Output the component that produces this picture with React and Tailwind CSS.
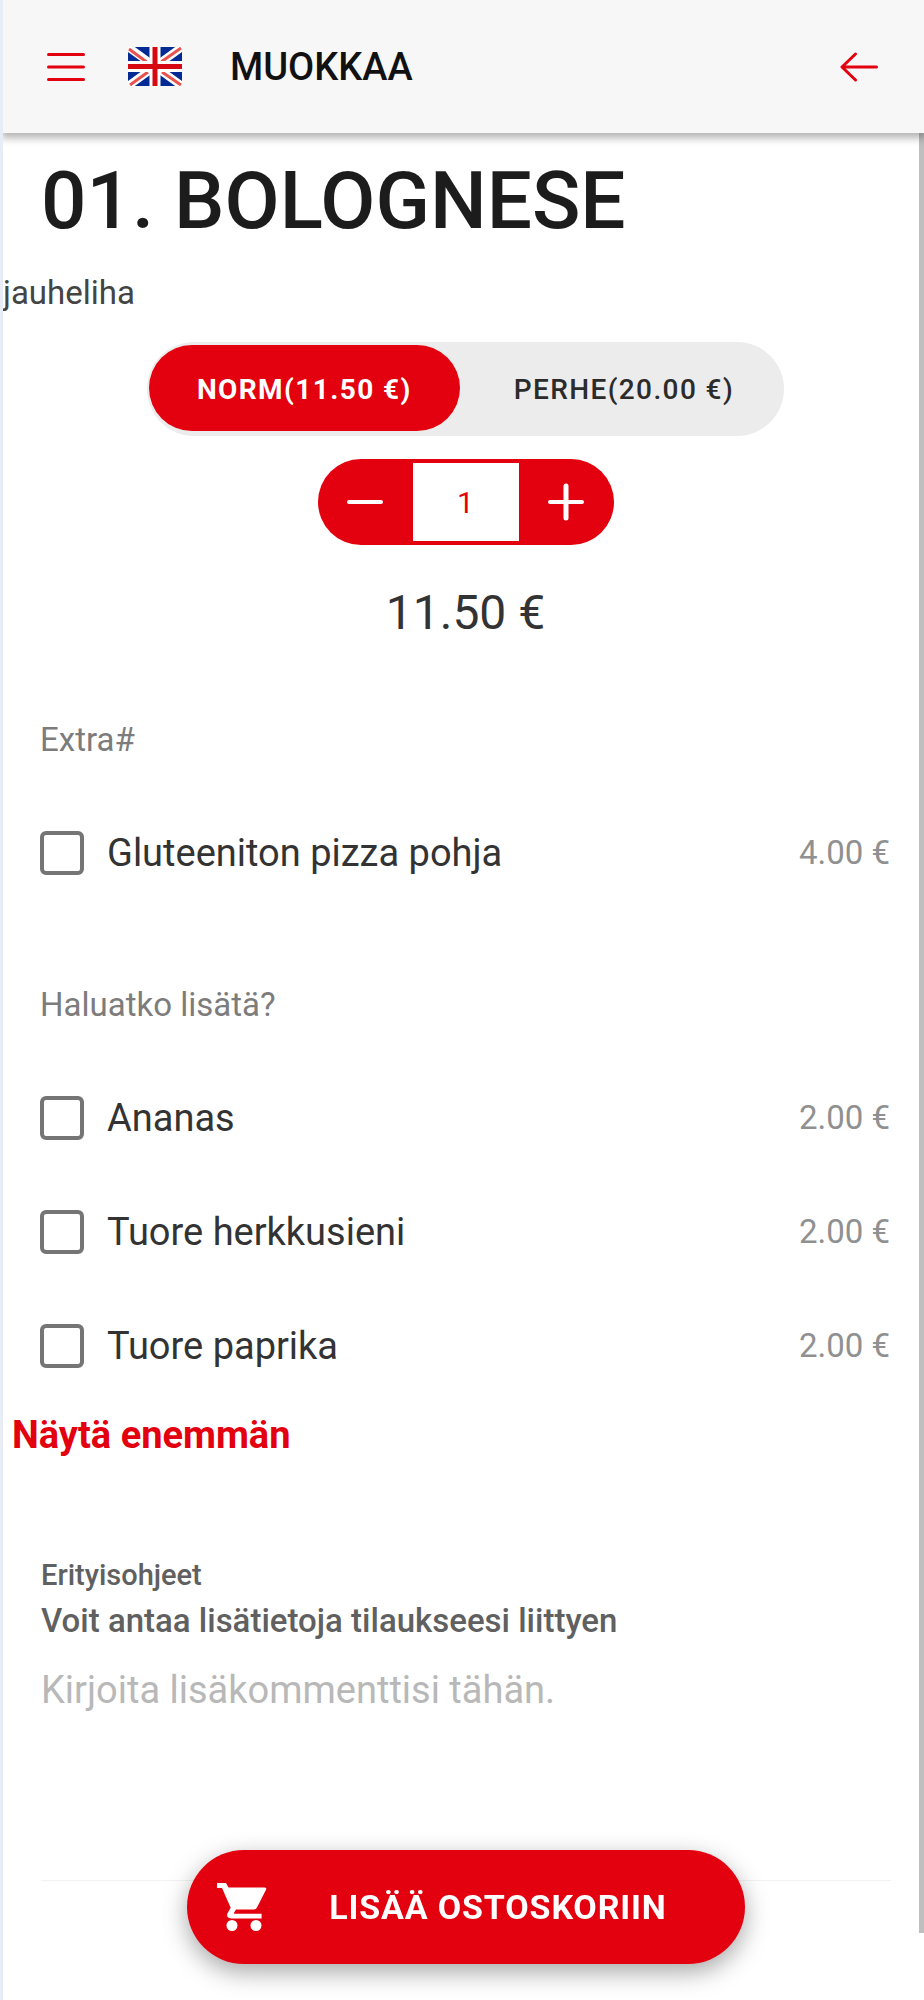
import { useState } from 'react';
import clsx from 'clsx';

const SIZES = [
  { id: 'norm', label: 'NORM', price: 11.5 },
  { id: 'perhe', label: 'PERHE', price: 20 },
];

const GROUPS = [
  { title: 'Extra#', options: [{ name: 'Gluteeniton pizza pohja', price: 4 }] },
  {
    title: 'Haluatko lisätä?',
    options: [
      { name: 'Ananas', price: 2 },
      { name: 'Tuore herkkusieni', price: 2 },
      { name: 'Tuore paprika', price: 2 },
    ],
  },
];

const formatPrice = (value) => `${value.toFixed(2)} €`;

function MenuIcon() {
  return (
    <svg width="38" height="30" viewBox="0 0 38 30" stroke="#e3000f" strokeWidth="3" strokeLinecap="round">
      <path d="M1.5 2.5h35M1.5 15h35M1.5 27.5h35" />
    </svg>
  );
}

function BackIcon() {
  return (
    <svg
      width="38"
      height="30"
      viewBox="0 0 38 30"
      fill="none"
      stroke="#e3000f"
      strokeWidth="3"
      strokeLinecap="round"
      strokeLinejoin="round"
    >
      <path d="M15.5 2 2 15l13.5 13M2 15h34.5" />
    </svg>
  );
}

function CartIcon() {
  return (
    <svg width="50" height="48" viewBox="0 0 50 48" fill="#fff">
      <path d="M0 0h9l2.500 4.500H47.500q2.500 0 1.500 2.300L40 24.500q-1 2-3.200 2H19l-2 3.200q-.4 1 .6 1h27v4.800H14q-5.500-.7-3.500-5.200l3.200-5.600L5 5H0z" />
      <circle cx="15" cy="42.500" r="5.500" />
      <circle cx="39" cy="42.500" r="5.500" />
    </svg>
  );
}

function UkFlag() {
  return (
    <svg width="54" height="39" viewBox="0 0 54 39">
      <path fill="#012a94" d="M0 0h54v39H0z" />
      <path stroke="#fff" strokeWidth="8" d="m0 0 54 39M54 0 0 39" />
      <path stroke="#e8534f" strokeWidth="3" d="M1 2 20 16M53 1 33 15M2 38l18-13M53 38 34 25" />
      <path stroke="#fff" strokeWidth="11" d="M27 0v39M0 19.5h54" />
      <path stroke="#d60812" strokeWidth="5" d="M27 0v39M0 19.5h54" />
    </svg>
  );
}

function Header() {
  return (
    <header className="relative z-10 flex h-[133px] items-center bg-[#f7f7f7] pr-[46px] pl-11 shadow-[0_3px_8px_2px_rgba(0,0,0,0.3)]">
      <button aria-label="Valikko">
        <MenuIcon />
      </button>
      <button aria-label="English" className="ml-[43px]">
        <UkFlag />
      </button>
      <h2 className="ml-12 flex-1 text-[38px] leading-none font-medium text-[#111]">MUOKKAA</h2>
      <button aria-label="Takaisin">
        <BackIcon />
      </button>
    </header>
  );
}

function SizePicker({ value, onChange }) {
  return (
    <div className="flex rounded-full bg-[#ececec] px-0.5 pt-[3px] pb-[5px]">
      {SIZES.map((size) => (
        <button
          key={size.id}
          aria-pressed={value === size.id}
          onClick={() => onChange(size.id)}
          className={clsx(
            'h-[86px] rounded-full px-12 pt-1 text-[28px] tracking-wider',
            value === size.id ? 'bg-[#e3000f] font-bold text-white' : 'pl-[54px] font-medium text-[#2b2b2b]'
          )}
        >
          {size.label}({formatPrice(size.price)})
        </button>
      ))}
    </div>
  );
}

function Stepper({ value, onChange }) {
  return (
    <div className="flex h-[86px] overflow-hidden rounded-full bg-[#e3000f] py-1">
      <button
        aria-label="Vähennä"
        onClick={() => onChange(Math.max(1, value - 1))}
        className="flex w-[95px] items-center justify-center"
      >
        <svg width="38" height="38" viewBox="0 0 38 38" stroke="#fff" strokeWidth="4" strokeLinecap="round">
          <path d="M3 19h32" />
        </svg>
      </button>
      <input
        aria-label="Määrä"
        value={value}
        readOnly
        className="w-[106px] bg-white text-center text-[30px] text-[#e3000f] outline-none"
      />
      <button
        aria-label="Lisää"
        onClick={() => onChange(value + 1)}
        className="flex w-[95px] items-center justify-center"
      >
        <svg width="38" height="38" viewBox="0 0 38 38" stroke="#fff" strokeLinecap="round">
          <path strokeWidth="4" d="M3 19h32" />
          <path strokeWidth="5" d="M19 3v32" />
        </svg>
      </button>
    </div>
  );
}

function OptionRow({ option }) {
  return (
    <label className="flex h-[114px] items-center">
      <input
        type="checkbox"
        className="size-11 shrink-0 appearance-none rounded-md border-4 border-[#757575] checked:border-[#e3000f] checked:bg-[#e3000f]"
      />
      <span className="ml-[23px] flex-1 text-[38px] text-[#333]">{option.name}</span>
      <span className="text-[33px] text-[#909090]">{formatPrice(option.price)}</span>
    </label>
  );
}

export default function App() {
  const [size, setSize] = useState('norm');
  const [count, setCount] = useState(1);

  const total = SIZES.find((s) => s.id === size).price * count;

  return (
    <div className="flex min-h-screen flex-col overflow-hidden border-l-[3px] border-[#e8ecf6] bg-white font-[Roboto,sans-serif]">
      <Header />

      <div className="relative flex-1">
        <main>
          <h1 className="mt-5 pl-[38px] text-[80px] leading-[96px] font-medium text-[#1c1c1c]">01. BOLOGNESE</h1>
          <p className="mt-[22px] text-[33px] leading-[44px] text-[#444]">jauheliha</p>

          <div className="mt-[27px] flex flex-col items-center pl-1">
            <SizePicker value={size} onChange={setSize} />
            <div className="mt-[23px]">
              <Stepper value={count} onChange={setCount} />
            </div>
            <p className="mt-10 text-[48px] leading-[56px] text-[#333]">{formatPrice(total)}</p>
          </div>

          <div className="mt-[77px] flex flex-col gap-[73px] pr-[34px] pl-[37px]">
            {GROUPS.map((group) => (
              <section key={group.title}>
                <h3 className="text-[33px] leading-[44px] text-[#7c7c7c]">{group.title}</h3>
                <div className="mt-[34px]">
                  {group.options.map((option) => (
                    <OptionRow key={option.name} option={option} />
                  ))}
                </div>
              </section>
            ))}
          </div>

          <button className="mt-2.5 ml-[9px] block text-[38px] leading-[44px] font-bold text-[#e3000f]">
            Näytä enemmän
          </button>

          <div className="mt-[97px] mr-[33px] ml-[38px] border-b border-[#f2f2f2]">
            <label htmlFor="note" className="block text-[#606060]">
              <span className="block text-[29px] leading-[42px] font-medium">Erityisohjeet</span>
              <span className="block text-[33px] leading-[50px] font-medium">
                Voit antaa lisätietoja tilaukseesi liittyen
              </span>
            </label>
            <textarea
              id="note"
              placeholder="Kirjoita lisäkommenttisi tähän."
              className="mt-5 block h-[214px] w-full resize-none text-[38px] leading-[48px] outline-none placeholder:text-[#b8b8b8]"
            />
          </div>
        </main>

        {/* scroll thumb, floats over the content */}
        <div className="absolute inset-y-0 right-0 w-[5px] pb-[67px]">
          <div className="h-full bg-[#bfbfbf]" />
        </div>
      </div>

      <div className="fixed inset-x-0 bottom-9 z-10 flex justify-center pl-2">
        <button className="flex h-[114px] items-center rounded-full bg-[#e3000f] pr-[78px] pl-[30px] text-white shadow-[0_8px_24px_rgba(0,0,0,0.35)]">
          <CartIcon />
          <span className="ml-[62px] text-[34px] font-bold tracking-wide">LISÄÄ OSTOSKORIIN</span>
        </button>
      </div>
    </div>
  );
}
